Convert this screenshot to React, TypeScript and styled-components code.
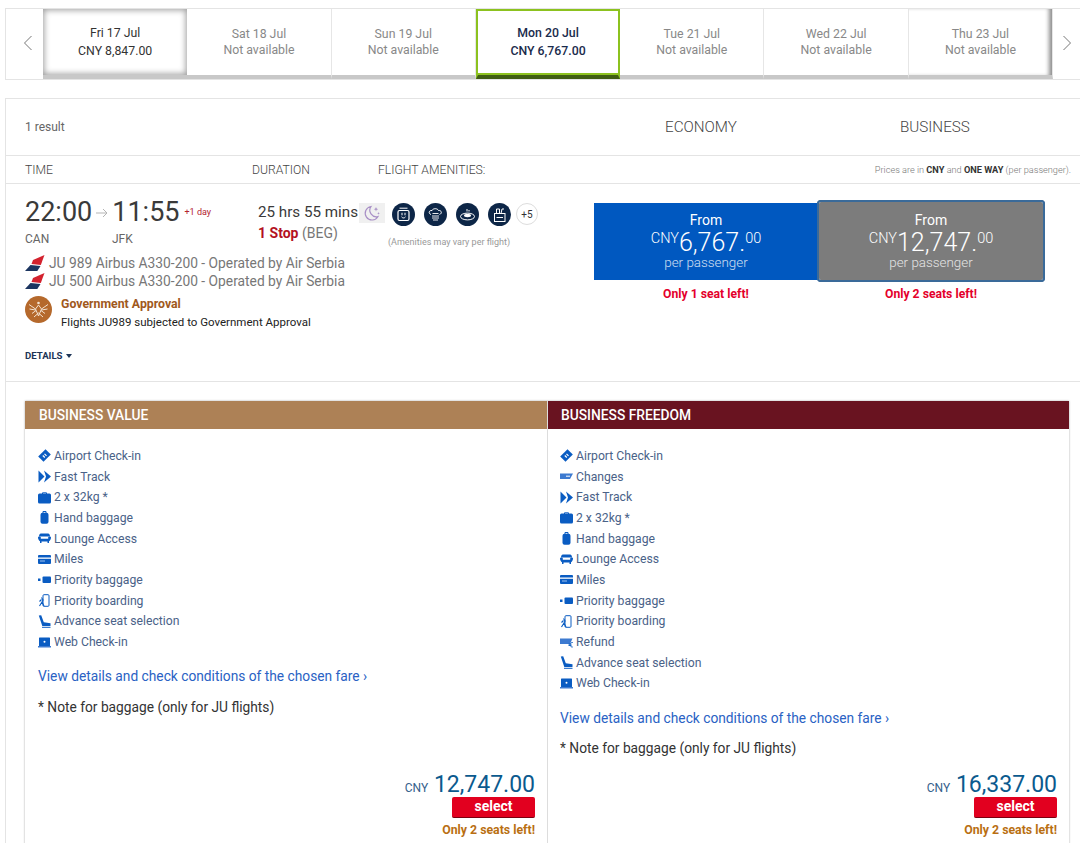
import React from 'react';
import styled, { createGlobalStyle } from 'styled-components';

const GlobalStyle = createGlobalStyle`
  html, body {
    margin: 0;
    padding: 0;
    height: 843px;
    overflow: hidden;
    background: #fff;
    font-family: Roboto, "Liberation Sans", sans-serif;
  }
`;

const dates = [
  { day: 'Fri 17 Jul', price: 'CNY 8,847.00', state: 'open' },
  { day: 'Sat 18 Jul', price: 'Not available', state: 'none' },
  { day: 'Sun 19 Jul', price: 'Not available', state: 'none' },
  { day: 'Mon 20 Jul', price: 'CNY 6,767.00', state: 'active' },
  { day: 'Tue 21 Jul', price: 'Not available', state: 'none' },
  { day: 'Wed 22 Jul', price: 'Not available', state: 'none' },
  { day: 'Thu 23 Jul', price: 'Not available', state: 'none' },
];

const BLUE = '#0a5cc2';

const IconTicket = () => (
  <svg width="13" height="13" viewBox="0 0 13 13">
    <path d="M7.500.2 12.800 5.500 5.500 12.800.2 7.500Z" fill={BLUE} />
    <path d="M4.800 6.500 6.800 8.500M6.500 4.800 8.500 6.800" stroke="#fff" strokeWidth="1.200" />
  </svg>
);
const IconChanges = () => (
  <svg width="13" height="13" viewBox="0 0 13 13">
    <path d="M0 3.500h13L10 9H0Z" fill="#3d7ad0" />
    <path d="M6 6.200h4" stroke="#fff" strokeWidth="1" />
  </svg>
);
const IconFast = () => (
  <svg width="13" height="13" viewBox="0 0 13 13">
    <path d="M.5.500 6.500 6.500.5 12.500Z M6 .500 13 6.500 6 12.500 8 6.500Z" fill={BLUE} />
  </svg>
);
const IconBag = () => (
  <svg width="13" height="13" viewBox="0 0 13 13">
    <path d="M4.500 3V1.800h4V3" stroke={BLUE} fill="none" />
    <rect x="0" y="2.500" width="13" height="10" rx="1.500" fill={BLUE} />
  </svg>
);
const IconHand = () => (
  <svg width="13" height="13" viewBox="0 0 13 13">
    <path d="M5 2V.5h3V2" stroke={BLUE} fill="none" />
    <rect x="2.500" y="1.800" width="8" height="11" rx="2" fill={BLUE} />
  </svg>
);
const IconLounge = () => (
  <svg width="13" height="13" viewBox="0 0 13 13">
    <path d="M3 1.500h7c1.500 0 2 1.500 2 3H1c0-1.500.5-3 2-3Z" fill={BLUE} />
    <path d="M0 5.500c0-1.200 2.800-1.200 2.800 0v1.300h7.400V5.500c0-1.200 2.800-1.200 2.800 0 0 1.500-1 3.300-2 3.800v1.700H9.500V9.500h-6V11H2V9.300C1 8.800 0 7 0 5.500Z" fill={BLUE} />
  </svg>
);
const IconMiles = () => (
  <svg width="13" height="13" viewBox="0 0 13 13">
    <rect x="0" y="2" width="13" height="9" rx="1" fill={BLUE} />
    <rect x="0" y="4.500" width="13" height="1.300" fill="#fff" />
    <rect x="2" y="7.500" width="5" height="1" fill="#9cc0ee" />
  </svg>
);
const IconPriorityBag = () => (
  <svg width="13" height="13" viewBox="0 0 13 13">
    <rect x="4.500" y="3.500" width="8.500" height="6.500" rx="1" fill={BLUE} />
    <rect x="0" y="5.500" width="2.500" height="2.500" fill={BLUE} />
  </svg>
);
const IconBoarding = () => (
  <svg width="13" height="13" viewBox="0 0 13 13">
    <rect x="5" y=".7" width="6" height="11.600" rx="1" fill="none" stroke={BLUE} strokeWidth="1" />
    <path d="M3.500 3.500 5 6 4 8 6 12M4 8 1.500 12M3.500 5.500 1.500 7.500" fill="none" stroke={BLUE} strokeWidth="1.100" />
  </svg>
);
const IconRefund = () => (
  <svg width="13" height="13" viewBox="0 0 13 13">
    <path d="M0 2.500h12.500L10 8H0Z" fill="#3d7ad0" />
    <path d="M12.800 6.500a2.300 2.300 0 1 0 0 4.500M8.500 8.200h3M8.500 9.500h3" fill="none" stroke={BLUE} strokeWidth=".9" />
  </svg>
);
const IconSeat = () => (
  <svg width="13" height="13" viewBox="0 0 13 13">
    <path d="M.8.500 3.200.2 5.800 7.200 12.500 8.300V11L4.300 11 Z" fill={BLUE} />
    <path d="M4 12.300h8.500" stroke={BLUE} strokeWidth="1" />
  </svg>
);
const IconWeb = () => (
  <svg width="13" height="13" viewBox="0 0 13 13">
    <rect x="1" y="1.500" width="11" height="8.500" rx=".6" fill={BLUE} />
    <rect x="0" y="10" width="13" height="1.500" fill="#3d7ad0" />
    <circle cx="6.500" cy="5.700" r="1" fill="#fff" />
  </svg>
);

const features: Record<string, React.ReactNode> = {
  'Airport Check-in': <IconTicket />,
  Changes: <IconChanges />,
  'Fast Track': <IconFast />,
  '2 x 32kg *': <IconBag />,
  'Hand baggage': <IconHand />,
  'Lounge Access': <IconLounge />,
  Miles: <IconMiles />,
  'Priority baggage': <IconPriorityBag />,
  'Priority boarding': <IconBoarding />,
  Refund: <IconRefund />,
  'Advance seat selection': <IconSeat />,
  'Web Check-in': <IconWeb />,
};

const fares = [
  {
    name: 'BUSINESS VALUE',
    tone: '#ad8156',
    price: '12,747.00',
    items: ['Airport Check-in', 'Fast Track', '2 x 32kg *', 'Hand baggage', 'Lounge Access', 'Miles', 'Priority baggage', 'Priority boarding', 'Advance seat selection', 'Web Check-in'],
  },
  {
    name: 'BUSINESS FREEDOM',
    tone: '#691320',
    price: '16,337.00',
    items: ['Airport Check-in', 'Changes', 'Fast Track', '2 x 32kg *', 'Hand baggage', 'Lounge Access', 'Miles', 'Priority baggage', 'Priority boarding', 'Refund', 'Advance seat selection', 'Web Check-in'],
  },
];

const AirlineTail = () => (
  <svg width="20" height="16" viewBox="0 0 20 16">
    <path d="M8 5 19.500 0 15.800 10 6.500 9Z" fill="#d3222e" />
    <path d="M5.500 10 15.500 11 12.300 16H0Z" fill="#1c3560" />
  </svg>
);

const ApprovalBadge = () => (
  <svg width="27" height="27" viewBox="0 0 27 27">
    <circle cx="13.500" cy="13.500" r="13.500" fill="#b5692c" />
    <path d="M13.500 9 10.500 13 13.500 20 16.500 13ZM4 8.500l6.500 4.500M23 8.500 16.500 13M4.500 13l6 1M22.500 13l-6 1M7 17.500l4-3M20 17.500l-4-3M9 21l4.500-4 4.500 4" fill="none" stroke="#f3e2d0" strokeWidth="1" />
    <circle cx="13.500" cy="7" r="1.300" fill="#f3e2d0" />
  </svg>
);

const Moon = () => (
  <svg width="18" height="17" viewBox="0 0 18 17">
    <path d="M8 1.500a6.800 6.800 0 1 0 7 10 6.500 6.500 0 0 1-7-10Z" fill="none" stroke="#a88fc6" strokeWidth="1.200" />
    <path d="M13 2l.6 1.600 1.600.6-1.600.6L13 6.400l-.6-1.600-1.600-.6 1.600-.6ZM15.500 7l.4 1 1 .4-1 .4-.4 1-.4-1-1-.4 1-.4Z" fill="#a88fc6" />
  </svg>
);

const amenityIcons = [
  <g key="power">
    <rect x="6" y="7.500" width="11" height="10" rx="1.500" fill="none" stroke="#fff" strokeWidth="1.200" />
    <path d="M10 9.800v2.500M13 9.800v2.500M9.500 13.800c1 1.500 3 1.500 4 0" stroke="#fff" fill="none" />
    <path d="M7.500 5.200h8" stroke="#fff" strokeWidth="1" />
  </g>,
  <g key="chef">
    <path d="M7 11.500c-3-1-2-4.500 1-4 1-2.400 5.500-2.400 6.500 0 3-.5 4 3 1 4" fill="none" stroke="#fff" />
    <path d="M8.500 10.500h6M8 13h7M8 15h7M9 17h5" stroke="#fff" strokeWidth=".9" />
  </g>,
  <g key="meal">
    <ellipse cx="11.500" cy="13.500" rx="7" ry="3.400" fill="none" stroke="#fff" />
    <ellipse cx="11.500" cy="12.500" rx="3.500" ry="1.700" fill="#fff" />
    <path d="M11 6v2.500M13 7v1.500" stroke="#fff" fill="none" />
  </g>,
  <g key="drink">
    <rect x="6.500" y="10.500" width="10.500" height="8" fill="none" stroke="#fff" />
    <path d="M8.500 10.500V6h3v4.500M13 10.500l1-4.500h2" stroke="#fff" fill="none" />
    <path d="M8.500 14.500h6.500" stroke="#fff" />
  </g>,
];

const App = () => {
  return (
    <Page>
      <GlobalStyle />
      <DateStrip>
        <NavButton>
          <svg width="10" height="16" viewBox="0 0 10 16">
            <path d="M8.500 1 1.500 8l7 7" fill="none" stroke="#777" strokeWidth="1" />
          </svg>
        </NavButton>
        {dates.map((d) => (
          <DateTab key={d.day} $state={d.state}>
            <DateDay>{d.day}</DateDay>
            <DatePrice $state={d.state}>{d.price}</DatePrice>
          </DateTab>
        ))}
        <NavButton $right>
          <svg width="10" height="16" viewBox="0 0 10 16">
            <path d="M1.500 1 8.500 8l-7 7" fill="none" stroke="#777" strokeWidth="1" />
          </svg>
        </NavButton>
      </DateStrip>

      <Results>
        <ResultHeader>
          <ResultCount>1 result</ResultCount>
          <CabinName>ECONOMY</CabinName>
          <CabinName>BUSINESS</CabinName>
        </ResultHeader>
        <ColumnHeader>
          <ColTime>TIME</ColTime>
          <ColDuration>DURATION</ColDuration>
          <span>FLIGHT AMENITIES:</span>
          <PriceNote>
            Prices are in <b>CNY</b> and <b>ONE WAY</b> (per passenger).
          </PriceNote>
        </ColumnHeader>

        <FlightRow>
          <FlightInfo>
            <TopLine>
              <TimeBlock>
                <Times>
                  <BigTime>22:00</BigTime>
                  <TimeArrow>
                    <svg width="12" height="10" viewBox="0 0 12 10">
                      <path d="M0 5h11M7 1l4 4-4 4" fill="none" stroke="#b5b5b5" strokeWidth="1" />
                    </svg>
                  </TimeArrow>
                  <BigTime>11:55</BigTime>
                  <PlusDay>+1 day</PlusDay>
                </Times>
                <Airports>
                  <AirportCode>CAN</AirportCode>
                  <span>JFK</span>
                </Airports>
              </TimeBlock>
              <DurationBlock>
                <DurationText>25 hrs 55 mins</DurationText>
                <StopLine>
                  <b>1 Stop</b> <span>(BEG)</span>
                </StopLine>
              </DurationBlock>
              <MoonBox>
                <Moon />
              </MoonBox>
              <AmenityBlock>
                <AmenityIcons>
                  {amenityIcons.map((icon, i) => (
                    <AmenityCircle key={i} viewBox="0 0 23 23">
                      <circle cx="11.500" cy="11.500" r="11.500" fill="#0d2647" />
                      {icon}
                    </AmenityCircle>
                  ))}
                  <MoreBadge>+5</MoreBadge>
                </AmenityIcons>
                <AmenityNote>(Amenities may vary per flight)</AmenityNote>
              </AmenityBlock>
            </TopLine>
            <FlightLine>
              <AirlineTail />
              <span>JU 989 Airbus A330-200 - Operated by Air Serbia</span>
            </FlightLine>
            <FlightLine>
              <AirlineTail />
              <span>JU 500 Airbus A330-200 - Operated by Air Serbia</span>
            </FlightLine>
            <Approval>
              <ApprovalBadge />
              <div>
                <ApprovalTitle>Government Approval</ApprovalTitle>
                <ApprovalText>Flights JU989 subjected to Government Approval</ApprovalText>
              </div>
            </Approval>
            <DetailsLink>
              DETAILS <Caret />
            </DetailsLink>
          </FlightInfo>

          <CabinColumn>
            <CabinBox>
              <FromLabel>From</FromLabel>
              <BoxPrice>
                <sup>CNY</sup>6,767.<sup>00</sup>
              </BoxPrice>
              <PerPassenger>per passenger</PerPassenger>
            </CabinBox>
            <SeatsLeft>Only 1 seat left!</SeatsLeft>
          </CabinColumn>
          <CabinColumn $selected>
            <CabinBox $selected>
              <FromLabel>From</FromLabel>
              <BoxPrice>
                <sup>CNY</sup>12,747.<sup>00</sup>
              </BoxPrice>
              <PerPassenger>per passenger</PerPassenger>
            </CabinBox>
            <SeatsLeft $selected>Only 2 seats left!</SeatsLeft>
          </CabinColumn>
        </FlightRow>

        <FareSection>
          <FareCard>
            {fares.map((fare) => (
              <FareColumn key={fare.name}>
                <FareHead $tone={fare.tone}>{fare.name}</FareHead>
                <FareBody>
                  <FeatureList>
                    {fare.items.map((item) => (
                      <Feature key={item}>
                        <FeatureIcon>{features[item]}</FeatureIcon>
                        {item}
                      </Feature>
                    ))}
                  </FeatureList>
                  <ConditionsLink>View details and check conditions of the chosen fare ›</ConditionsLink>
                  <BaggageNote>* Note for baggage (only for JU flights)</BaggageNote>
                  <PriceFoot>
                    <FootPrice>
                      <small>CNY</small> {fare.price}
                    </FootPrice>
                    <SelectButton>select</SelectButton>
                    <FootSeats>Only 2 seats left!</FootSeats>
                  </PriceFoot>
                </FareBody>
              </FareColumn>
            ))}
          </FareCard>
        </FareSection>
      </Results>
    </Page>
  );
};

const tabPadding: Record<string, string> = { active: '14px', open: '16px', none: '17px' };

const Page = styled.div`
  width: 1080px;
  height: 843px;
  overflow: hidden;
  box-sizing: border-box;
  padding: 8px 0 0 5px;
`;
const DateStrip = styled.div`
  display: flex;
  height: 72px;
  box-sizing: border-box;
  border-top: 1px solid #e4e4e4;
  border-bottom: 1px solid #e4e4e4;
  border-left: 1px solid #e4e4e4;
`;
const NavButton = styled.div<{ $right?: boolean }>`
  flex: 0 0 ${({ $right }) => ($right ? '28px' : '37px')};
  display: flex;
  align-items: center;
  justify-content: center;
  padding: ${({ $right }) => ($right ? '0 0 2px 0' : '0 0 2px 6px')};
  box-sizing: border-box;
`;
const DateTab = styled.div<{ $state: string }>`
  flex: 0 0 144.3px;
  box-sizing: border-box;
  display: flex;
  flex-direction: column;
  align-items: center;
  padding-top: ${({ $state }) => tabPadding[$state]};
  line-height: 17px;
  font-size: 12.3px;
  color: ${({ $state }) => ($state === 'none' ? '#888' : $state === 'active' ? '#1a2b4c' : '#333')};
  font-weight: ${({ $state }) => ($state === 'active' ? 500 : 400)};
  border-right: ${({ $state }) => ($state === 'none' ? '1px solid #e6e6e6' : '0')};
  border-bottom: 4px solid ${({ $state }) => ($state === 'active' ? '#3f5d12' : '#c8c8c8')};
  ${({ $state }) => $state === 'active' && 'border-top: 2px solid #8cc21f; border-left: 2px solid #8cc21f; border-right: 2px solid #8cc21f; box-shadow: inset 0 -2px 0 #8cc21f;'}
  ${({ $state }) => $state === 'open' && 'box-shadow: inset 0 0 6px 1px rgba(0,0,0,.4);'}
  &:nth-child(8) {
    box-shadow: inset -5px 0 4px -2px rgba(0, 0, 0, 0.45);
  }
`;
const DateDay = styled.div``;
const DatePrice = styled.div<{ $state: string }>`
  margin-top: ${({ $state }) => ($state === 'none' ? '-1px' : '1px')};
`;

const Results = styled.div`
  margin-top: 18px;
  border-left: 1px solid #e4e4e4;
  border-top: 1px solid #e4e4e4;
  color: #555;
`;
const ResultHeader = styled.div`
  display: grid;
  grid-template-columns: 640px 235px 1fr;
  align-items: center;
  height: 56px;
  padding-left: 19px;
  border-bottom: 1px solid #e4e4e4;
`;
const ResultCount = styled.span`
  font-size: 12px;
  color: #666;
`;
const CabinName = styled.span`
  font-size: 15.2px;
  font-weight: 300;
  color: #444;
`;
const ColumnHeader = styled.div`
  display: flex;
  align-items: center;
  height: 27px;
  padding-left: 19px;
  padding-right: 9px;
  font-size: 12.2px;
  font-weight: 300;
  color: #444;
  border-bottom: 1px solid #e4e4e4;
`;
const ColTime = styled.span`
  width: 227px;
`;
const ColDuration = styled.span`
  width: 126px;
`;
const PriceNote = styled.span`
  margin-left: auto;
  font-size: 9.2px;
  color: #777;
  b {
    color: #333;
    font-weight: 700;
  }
`;
const FlightRow = styled.div`
  display: flex;
  height: 198px;
  box-sizing: border-box;
  padding: 17px 0 0 19px;
  border-bottom: 1px solid #e4e4e4;
`;
const FlightInfo = styled.div`
  width: 569px;
`;
const TopLine = styled.div`
  display: flex;
  height: 53px;
`;
const TimeBlock = styled.div`
  width: 233px;
`;
const Times = styled.div`
  display: flex;
  align-items: center;
  height: 24px;
  margin-top: -1px;
`;
const BigTime = styled.span`
  font-size: 27px;
  line-height: 24px;
  color: #3a3a3a;
  font-weight: 400;
`;
const TimeArrow = styled.span`
  width: 20px;
  display: flex;
  justify-content: center;
  padding-top: 2px;
`;
const PlusDay = styled.span`
  margin-left: 5px;
  font-size: 9px;
  color: #b3232f;
`;
const Airports = styled.div`
  display: flex;
  margin-top: 8px;
  font-size: 12px;
  color: #666;
`;
const AirportCode = styled.span`
  width: 87px;
`;
const DurationBlock = styled.div`
  width: 101px;
  white-space: nowrap;
`;
const DurationText = styled.div`
  margin-top: 1px;
  font-size: 15.2px;
  line-height: 20px;
  color: #3a3a3a;
`;
const StopLine = styled.div`
  margin-top: 2px;
  font-size: 14px;
  line-height: 18px;
  color: #777;
  b {
    color: #b3121f;
    font-weight: 700;
  }
`;
const MoonBox = styled.div`
  width: 26px;
  height: 20px;
  margin-top: 2px;
  background: #f0f0f0;
  display: flex;
  align-items: center;
  justify-content: center;
`;
const AmenityBlock = styled.div`
  margin-left: 7px;
`;
const AmenityIcons = styled.div`
  display: flex;
  align-items: center;
  gap: 9px;
  height: 24px;
  margin-top: 1px;
`;
const AmenityCircle = styled.svg`
  width: 23px;
  height: 23px;
`;
const MoreBadge = styled.span`
  width: 20px;
  height: 20px;
  margin-left: -4px;
  border: 1px solid #ddd;
  border-radius: 50%;
  display: flex;
  align-items: center;
  justify-content: center;
  font-size: 10px;
  color: #333;
`;
const AmenityNote = styled.div`
  margin: 11px 0 0 -4px;
  font-size: 9px;
  color: #999;
`;
const FlightLine = styled.div`
  display: flex;
  align-items: center;
  gap: 4px;
  height: 18px;
  font-size: 13.8px;
  color: #777;
  white-space: nowrap;
`;
const Approval = styled.div`
  display: flex;
  gap: 9px;
  margin-top: 6px;
`;
const ApprovalTitle = styled.div`
  font-size: 12.3px;
  line-height: 16px;
  font-weight: 700;
  color: #a0591d;
`;
const ApprovalText = styled.div`
  margin-top: 2px;
  font-size: 11.5px;
  line-height: 16px;
  color: #222;
`;
const DetailsLink = styled.div`
  margin-top: 20px;
  display: flex;
  align-items: center;
  gap: 3px;
  font-size: 9.6px;
  font-weight: 700;
  color: #1d3557;
`;
const Caret = styled.span`
  width: 0;
  height: 0;
  border-left: 3.5px solid transparent;
  border-right: 3.5px solid transparent;
  border-top: 4px solid #1d3557;
`;
const CabinColumn = styled.div<{ $selected?: boolean }>`
  width: ${({ $selected }) => ($selected ? '226px' : '224px')};
  margin-top: ${({ $selected }) => ($selected ? '0' : '2px')};
`;
const CabinBox = styled.div<{ $selected?: boolean }>`
  box-sizing: border-box;
  height: ${({ $selected }) => ($selected ? '80px' : '77px')};
  padding-top: ${({ $selected }) => ($selected ? '10px' : '9px')};
  background: ${({ $selected }) => ($selected ? '#7c7c7c' : '#0058c0')};
  color: #fff;
  text-align: center;
  ${({ $selected }) => $selected && 'border: 1px solid #fff; outline: 2px solid #3a6a99; outline-offset: -1px; border-radius: 3px; box-shadow: 0 0 0 1px #3a6a99;'}
`;
const FromLabel = styled.div`
  font-size: 14px;
  line-height: 16px;
`;
const BoxPrice = styled.div`
  margin-top: 3px;
  font-size: 25px;
  line-height: 24px;
  font-weight: 300;
  sup {
    font-size: 14.5px;
    line-height: 0;
    vertical-align: 8px;
  }
`;
const PerPassenger = styled.div`
  font-size: 13.4px;
  line-height: 16px;
  font-weight: 300;
  opacity: 0.8;
`;
const SeatsLeft = styled.div<{ $selected?: boolean }>`
  margin-top: ${({ $selected }) => ($selected ? '6px' : '7px')};
  text-align: center;
  font-size: 12.2px;
  line-height: 14px;
  font-weight: 700;
  color: #e4002b;
`;
const FareSection = styled.div`
  padding: 19px 0 0 19px;
`;
const FareCard = styled.div`
  width: 1044px;
  display: grid;
  grid-template-columns: 523px 521px;
  box-shadow: 0 0 2px rgba(0, 0, 0, 0.35);
`;
const FareHead = styled.div<{ $tone: string }>`
  height: 28px;
  line-height: 28px;
  padding-left: 14px;
  font-size: 13.8px;
  font-weight: 500;
  color: #fff;
  background: ${({ $tone }) => $tone};
`;
const FareBody = styled.div`
  flex: 1;
  display: flex;
  flex-direction: column;
  padding: 16.5px 13px 10px 13px;
`;
const FareColumn = styled.div`
  display: flex;
  flex-direction: column;
  & + & {
    box-shadow: -1px 0 0 #ddd;
    ${FareHead} {
      padding-left: 13px;
    }
    ${FareBody} {
      padding-left: 12px;
      padding-right: 12px;
    }
  }
`;
const FeatureList = styled.div`
  display: flex;
  flex-direction: column;
`;
const Feature = styled.div`
  display: flex;
  align-items: center;
  height: 20.7px;
  font-size: 12.2px;
  color: #4a6288;
`;
const FeatureIcon = styled.span`
  width: 16px;
  display: flex;
  align-items: center;
  svg {
    display: block;
  }
`;
const ConditionsLink = styled.div`
  margin-top: 15px;
  font-size: 13.75px;
  line-height: 18px;
  color: #2a62c4;
`;
const BaggageNote = styled.div`
  margin-top: 12.5px;
  font-size: 13.75px;
  line-height: 18px;
  color: #333;
`;
const PriceFoot = styled.div`
  margin-top: auto;
  padding-top: 19.5px;
  display: flex;
  flex-direction: column;
  align-items: flex-end;
`;
const FootPrice = styled.div`
  font-size: 23px;
  line-height: 16px;
  color: #0b5a8e;
  small {
    font-size: 12px;
    color: #35618c;
  }
`;
const SelectButton = styled.div`
  width: 83px;
  height: 21px;
  margin-top: 1px;
  box-sizing: border-box;
  text-align: center;
  line-height: 19px;
  font-size: 14px;
  font-weight: 700;
  color: #fff;
  background: #e2001f;
  border-bottom: 1px solid #7a0010;
  border-radius: 2px;
`;
const FootSeats = styled.div`
  margin-top: 5px;
  font-size: 12.3px;
  line-height: 14px;
  font-weight: 700;
  color: #b96f12;
`;

export default App;
